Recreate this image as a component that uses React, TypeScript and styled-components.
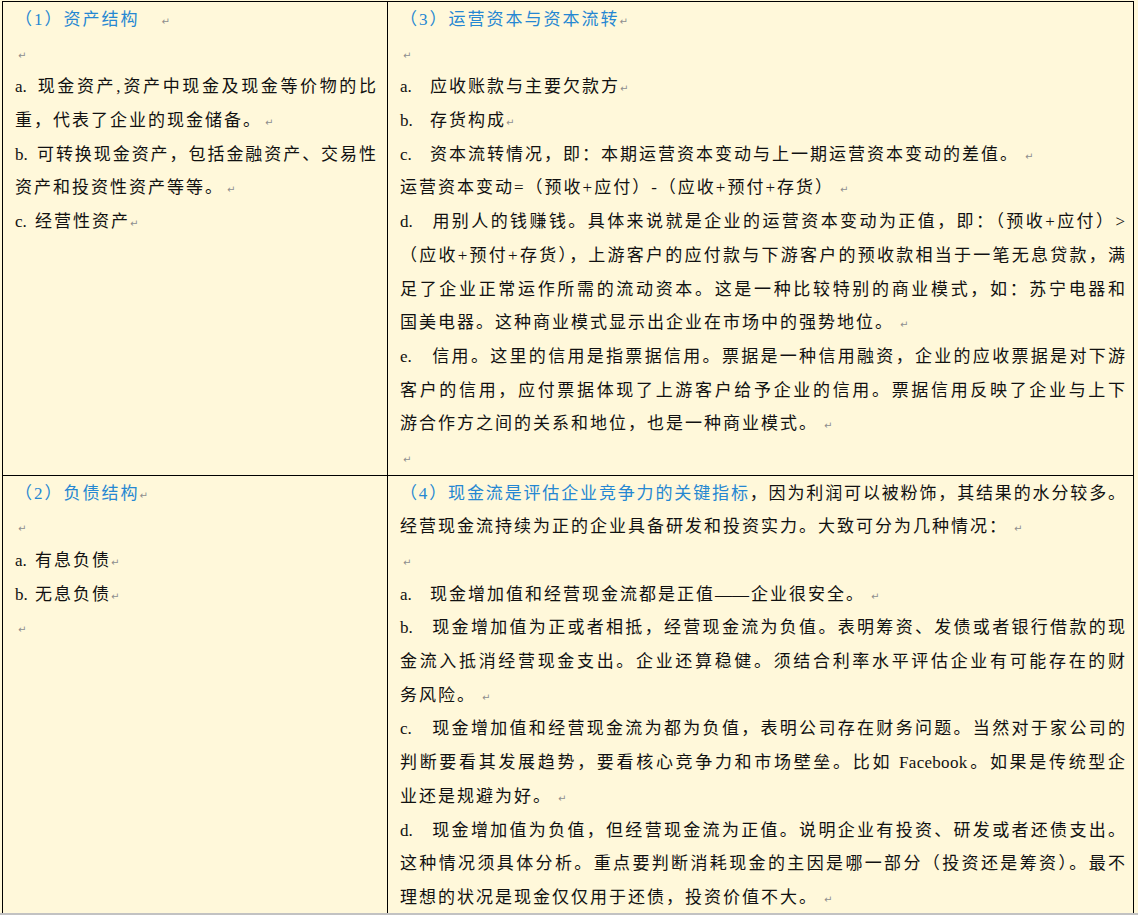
import { FC } from "react";
import styled, { createGlobalStyle } from "styled-components";

const GlobalStyle = createGlobalStyle`
  html, body {
    margin: 0;
    padding: 0;
    background: #fff8da;
  }
`;

const Page = styled.div`
  height: 915px;
  box-sizing: border-box;
  overflow: hidden;
  padding: 1px 0 0 2px;
  border-bottom: 2px solid #c2c2c2;
  font-family: "Liberation Serif", "Noto Sans CJK SC", serif;
  font-size: 17px;
  color: #111;
`;

const Table = styled.div`
  width: 1132px;
  box-sizing: border-box;
  display: grid;
  grid-template-columns: 385px 1fr;
  border: 1px solid #000;
  border-bottom: none;
`;

const Cell = styled.div<{ $left?: boolean; $top?: boolean }>`
  padding: 1px ${(p) => (p.$left ? "11px" : "8px")} 0 12px;
  border-right: ${(p) => (p.$left ? "1px solid #000" : "none")};
  border-bottom: ${(p) => (p.$top ? "1px solid #000" : "none")};
`;

const Line = styled.div<{ $justify?: boolean }>`
  height: 33.7px;
  line-height: 33.7px;
  letter-spacing: ${(p) => (p.$justify ? "0" : "2px")};
  white-space: ${(p) => (p.$justify ? "normal" : "nowrap")};
  text-align: ${(p) => (p.$justify ? "justify" : "left")};
  text-align-last: ${(p) => (p.$justify ? "justify" : "auto")};
`;

const Heading = styled.span`
  color: #2587d2;
`;

const Marker = styled.span<{ $wide?: boolean }>`
  display: inline-block;
  width: ${(p) => (p.$wide ? "30px" : "20px")};
  font-size: 17px;
  letter-spacing: 0;
`;

const Latin = styled.span`
  font-size: 17px;
  letter-spacing: 0.3px;
`;

const Dash = styled.span`
  letter-spacing: 0;
  margin-right: 2px;
`;

const Return = styled.span<{ $gap?: number }>`
  margin-left: ${(p) => p.$gap ?? 3}px;
  font-family: "DejaVu Sans", sans-serif;
  font-size: 10px;
  letter-spacing: 0;
  color: #8e8e8e;
`;

const Mark: FC<{ gap?: number }> = ({ gap }) => <Return $gap={gap}>↵</Return>;

const App: FC = () => {
  return (
    <Page>
      <GlobalStyle />
      <Table>
        <Cell $left $top>
          <Line>
            <Heading>（1）资产结构</Heading>
            <Mark gap={22} />
          </Line>
          <Line>
            <Mark gap={3} />
          </Line>
          <Line $justify>
            <Marker>a.</Marker>现金资产<Latin>,</Latin>资产中现金及现金等价物的比
          </Line>
          <Line>
            重，代表了企业的现金储备。
            <Mark />
          </Line>
          <Line $justify>
            <Marker>b.</Marker>可转换现金资产，包括金融资产、交易性
          </Line>
          <Line>
            资产和投资性资产等等。
            <Mark />
          </Line>
          <Line>
            <Marker>c.</Marker>经营性资产
            <Mark gap={0} />
          </Line>
        </Cell>

        <Cell $top>
          <Line>
            <Heading>（3）运营资本与资本流转</Heading>
            <Mark gap={0} />
          </Line>
          <Line>
            <Mark gap={3} />
          </Line>
          <Line>
            <Marker $wide>a.</Marker>应收账款与主要欠款方
            <Mark gap={0} />
          </Line>
          <Line>
            <Marker $wide>b.</Marker>存货构成
            <Mark gap={0} />
          </Line>
          <Line>
            <Marker $wide>c.</Marker>资本流转情况，即：本期运营资本变动与上一期运营资本变动的差值。
            <Mark gap={6} />
          </Line>
          <Line>
            运营资本变动=（预收+应付）-（应收+预付+存货）
            <Mark gap={6} />
          </Line>
          <Line $justify>
            <Marker $wide>d.</Marker>用别人的钱赚钱。具体来说就是企业的运营资本变动为正值，即：（预收+应付）&gt;
          </Line>
          <Line $justify>（应收+预付+存货），上游客户的应付款与下游客户的预收款相当于一笔无息贷款，满</Line>
          <Line $justify>足了企业正常运作所需的流动资本。这是一种比较特别的商业模式，如：苏宁电器和</Line>
          <Line>
            国美电器。这种商业模式显示出企业在市场中的强势地位。
            <Mark gap={6} />
          </Line>
          <Line $justify>
            <Marker $wide>e.</Marker>信用。这里的信用是指票据信用。票据是一种信用融资，企业的应收票据是对下游
          </Line>
          <Line $justify>客户的信用，应付票据体现了上游客户给予企业的信用。票据信用反映了企业与上下</Line>
          <Line>
            游合作方之间的关系和地位，也是一种商业模式。
            <Mark gap={6} />
          </Line>
          <Line>
            <Mark gap={3} />
          </Line>
        </Cell>

        <Cell $left>
          <Line>
            <Heading>（2）负债结构</Heading>
            <Mark gap={0} />
          </Line>
          <Line>
            <Mark gap={3} />
          </Line>
          <Line>
            <Marker>a.</Marker>有息负债
            <Mark gap={0} />
          </Line>
          <Line>
            <Marker>b.</Marker>无息负债
            <Mark gap={0} />
          </Line>
          <Line>
            <Mark gap={3} />
          </Line>
        </Cell>

        <Cell>
          <Line $justify>
            <Heading>（4）现金流是评估企业竞争力的关键指标</Heading>，因为利润可以被粉饰，其结果的水分较多。
          </Line>
          <Line>
            经营现金流持续为正的企业具备研发和投资实力。大致可分为几种情况：
            <Mark gap={6} />
          </Line>
          <Line>
            <Mark gap={3} />
          </Line>
          <Line>
            <Marker $wide>a.</Marker>现金增加值和经营现金流都是正值<Dash>——</Dash>企业很安全。
            <Mark gap={6} />
          </Line>
          <Line $justify>
            <Marker $wide>b.</Marker>现金增加值为正或者相抵，经营现金流为负值。表明筹资、发债或者银行借款的现
          </Line>
          <Line $justify>金流入抵消经营现金支出。企业还算稳健。须结合利率水平评估企业有可能存在的财</Line>
          <Line>
            务风险。
            <Mark gap={6} />
          </Line>
          <Line $justify>
            <Marker $wide>c.</Marker>现金增加值和经营现金流为都为负值，表明公司存在财务问题。当然对于家公司的
          </Line>
          <Line $justify>
            判断要看其发展趋势，要看核心竞争力和市场壁垒。比如 <Latin>Facebook</Latin>。如果是传统型企
          </Line>
          <Line>
            业还是规避为好。
            <Mark gap={6} />
          </Line>
          <Line $justify>
            <Marker $wide>d.</Marker>现金增加值为负值，但经营现金流为正值。说明企业有投资、研发或者还债支出。
          </Line>
          <Line $justify>这种情况须具体分析。重点要判断消耗现金的主因是哪一部分（投资还是筹资）。最不</Line>
          <Line>
            理想的状况是现金仅仅用于还债，投资价值不大。
            <Mark gap={6} />
          </Line>
        </Cell>
      </Table>
    </Page>
  );
};

export default App;
